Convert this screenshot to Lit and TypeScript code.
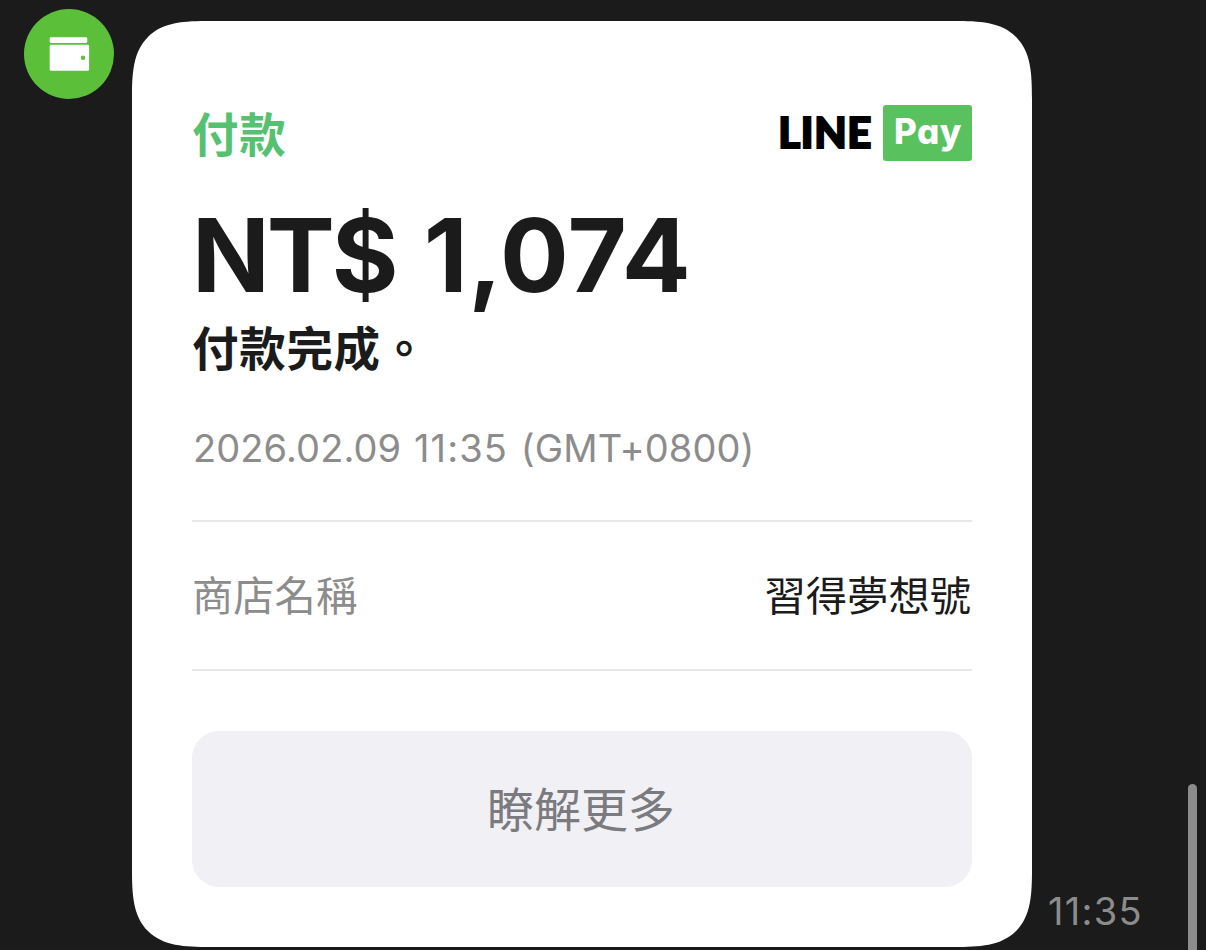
import { LitElement, html, css } from "lit";
import { customElement, property } from "lit/decorators.js";

interface Receipt {
  type: string;
  currency: string;
  amount: string;
  status: string;
  paidDate: string;
  paidTime: string;
  timezone: string;
  details: { label: string; value: string }[];
  action: string;
  sentAt: string;
}

const receipt: Receipt = {
  type: "付款",
  currency: "NT$",
  amount: "1,074",
  status: "付款完成。",
  paidDate: "2026.02.09",
  paidTime: "11:35",
  timezone: "(GMT+0800)",
  details: [{ label: "商店名稱", value: "習得夢想號" }],
  action: "瞭解更多",
  sentAt: "11:35",
};

/**
 * Round green avatar with the wallet glyph
 */
@customElement("wallet-avatar")
export class WalletAvatar extends LitElement {
  static styles = css`
    :host {
      display: block;
      width: 90px;
      height: 90px;
    }

    svg {
      display: block;
    }
  `;

  render() {
    return html`
      <svg width="90" height="90" viewBox="0 0 90 90" aria-hidden="true">
        <circle cx="45" cy="45" r="45" fill="#5bbf3a" />
        <rect x="25.7" y="28.3" width="37.6" height="5.7" rx="1.4" fill="#fff" />
        <rect x="25.7" y="35.8" width="39.4" height="26" rx="1.4" fill="#fff" />
        <circle cx="59" cy="48.8" r="2.2" fill="#5bbf3a" />
      </svg>
    `;
  }
}

/**
 * LINE Pay wordmark
 */
@customElement("pay-logo")
export class PayLogo extends LitElement {
  static styles = css`
    :host {
      display: flex;
      align-items: center;
    }

    .line {
      color: #000;
      font-family: Lato, sans-serif;
      font-size: 42px;
      font-weight: 900;
      line-height: 55px;
      letter-spacing: 0.6px;
      margin: 0 11px 2px 0;
      -webkit-text-stroke: 2px #000;
      stroke-linejoin: round;
    }

    .pay {
      box-sizing: border-box;
      width: 89px;
      height: 56px;
      padding-left: 1px;
      border-radius: 3px;
      background: #5ac15f;
      color: #fff;
      font-family: Inter, sans-serif;
      font-size: 35px;
      font-weight: 800;
      line-height: 53px;
      letter-spacing: 0.6px;
      text-align: center;
      font-feature-settings: "cv11";
    }
  `;

  render() {
    return html`
      <span class="line">LINE</span>
      <span class="pay">Pay</span>
    `;
  }
}

@customElement("receipt-card")
export class ReceiptCard extends LitElement {
  static styles = css`
    :host {
      display: block;
      box-sizing: border-box;
      width: 900px;
      height: 926px;
      padding: 84px 60px 60px;
      background: #fff;
      border-radius: 54px;
      color: #1b1b1b;
    }

    @supports (corner-shape: superellipse(1.6)) {
      :host {
        border-radius: 78px;
        corner-shape: superellipse(1.6);
      }
    }

    .header {
      display: flex;
      justify-content: space-between;
      height: 56px;
    }

    .type,
    .status {
      font-size: 46.5px;
      font-weight: 700;
      line-height: 60px;
      letter-spacing: 0.7px;
    }

    .type {
      color: #56c271;
    }

    .amount {
      display: flex;
      gap: 28px;
      margin-top: 34px;
      font-size: 102px;
      font-weight: 700;
      line-height: 120px;
    }

    .currency {
      letter-spacing: -3px;
    }

    .value {
      letter-spacing: 0.7px;
    }

    .status {
      margin-top: 4px;
    }

    .paid-at {
      margin-top: 39px;
      padding-left: 1px;
      color: #8c8c8c;
      font-size: 38px;
      line-height: 60px;
      letter-spacing: 0.1px;
      word-spacing: 2px;
    }

    .clock {
      letter-spacing: 1.1px;
    }

    .details {
      margin-top: 42px;
      border-top: 2px solid #e8e8e8;
      border-bottom: 2px solid #e8e8e8;
      padding: 44px 0 43px;
    }

    .row {
      display: flex;
      justify-content: space-between;
      padding-right: 1px;
      font-size: 41.3px;
      line-height: 60px;
    }

    .label {
      color: #8c8c8c;
    }

    .action {
      display: block;
      width: 100%;
      height: 156px;
      margin-top: 60px;
      padding: 0 2px 5px 0;
      border: 0;
      border-radius: 27px;
      background: #f0f0f5;
      color: #7b7b7f;
      font: inherit;
      font-size: 47px;
    }
  `;

  @property({ type: Object })
  receipt: Receipt = receipt;

  render() {
    const { type, currency, amount, status, paidDate, paidTime, timezone, details, action } =
      this.receipt;

    return html`
      <div class="header">
        <span class="type">${type}</span>
        <pay-logo></pay-logo>
      </div>
      <div class="amount">
        <span class="currency">${currency}</span>
        <span class="value">${amount}</span>
      </div>
      <div class="status">${status}</div>
      <div class="paid-at">${paidDate} <span class="clock">${paidTime}</span> ${timezone}</div>
      <div class="details">
        ${details.map(
          (item) => html`
            <div class="row">
              <span class="label">${item.label}</span>
              <span>${item.value}</span>
            </div>
          `,
        )}
      </div>
      <button class="action">${action}</button>
    `;
  }
}

@customElement("app-root")
export class AppRoot extends LitElement {
  static styles = css`
    :host {
      display: flex;
      align-items: flex-start;
      box-sizing: border-box;
      width: 1206px;
      height: 950px;
      padding: 0 9px 0 24px;
      overflow: hidden;
      background: #1b1b1b;
      font-family: Inter, "Noto Sans CJK TC", sans-serif;
    }

    .avatar {
      margin: 9px 18px 0 0;
    }

    .card {
      flex: none;
      margin-top: 21px;
    }

    .time {
      align-self: flex-end;
      margin: 0 0 9px 16px;
      color: #8c8c8c;
      font-size: 38px;
      line-height: 60px;
      letter-spacing: 1.3px;
    }

    .scrollbar {
      align-self: flex-end;
      width: 9px;
      height: 166px;
      margin-left: auto;
      border-radius: 5px 5px 0 0;
      background: #8c8c8c;
    }
  `;

  render() {
    return html`
      <wallet-avatar class="avatar"></wallet-avatar>
      <receipt-card class="card" .receipt=${receipt}></receipt-card>
      <span class="time">${receipt.sentAt}</span>
      <div class="scrollbar"></div>
    `;
  }
}

declare global {
  interface HTMLElementTagNameMap {
    "app-root": AppRoot;
    "receipt-card": ReceiptCard;
    "pay-logo": PayLogo;
    "wallet-avatar": WalletAvatar;
  }
}
